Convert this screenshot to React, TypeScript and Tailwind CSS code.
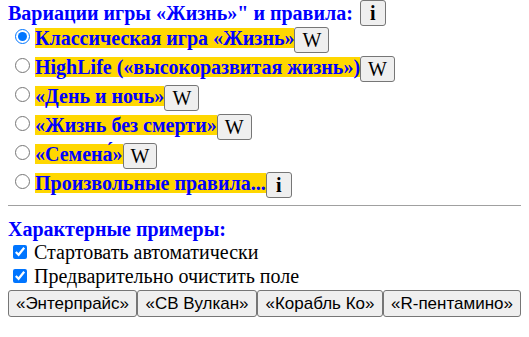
import { useState } from "react";

const rules = [
  { id: "classic", label: "Классическая игра «Жизнь»", btn: "W" },
  { id: "highlife", label: "HighLife («высокоразвитая жизнь»)", btn: "W" },
  { id: "daynight", label: "«День и ночь»", btn: "W" },
  { id: "nodeath", label: "«Жизнь без смерти»", btn: "W" },
  { id: "seeds", label: "«Семена́»", btn: "W" },
  { id: "custom", label: "Произвольные правила...", btn: "i" },
];

const examples = [
  { label: "«Энтерпрайс»", w: "w-[129px]" },
  { label: "«СВ Вулкан»", w: "w-[120px]" },
  { label: "«Корабль Ко»", w: "w-[126px]" },
  { label: "«R-пентамино»", w: "w-[138px]" },
];

function SmallButton({ children }: { children: string }) {
  return (
    <button
      type="button"
      className="h-[26px] px-[7px] border border-[#767676] rounded-[3px] bg-[#efefef] text-black text-[20px] leading-[22px] font-['Liberation_Serif',serif]"
    >
      {children}
    </button>
  );
}

function InfoButton() {
  return (
    <button
      type="button"
      className="h-[26px] w-[26px] border border-[#767676] rounded-[3px] bg-[#efefef] text-black text-[20px] font-bold leading-[22px] font-['Liberation_Serif',serif]"
    >
      i
    </button>
  );
}

export default function App() {
  const [rule, setRule] = useState("classic");
  const [autoStart, setAutoStart] = useState(true);
  const [clearField, setClearField] = useState(true);

  return (
    <div className="w-[529px] h-[337px] bg-white px-[8px] font-['Liberation_Serif',serif] text-black overflow-hidden">
      {/* Heading */}
      <div className="flex items-start h-[25px]">
        <h2 className="text-[20px] font-bold text-[#0000ff] leading-[24px] pt-[1px] whitespace-nowrap">
          Вариации игры «Жизнь»" и правила:
        </h2>
        <span className="ml-[7px]">
          <InfoButton />
        </span>
      </div>

      {/* Rules */}
      <div className="pl-[7px]">
        {rules.map((r) => (
          <div key={r.id} className="flex items-center h-[29px]">
            <input
              type="radio"
              name="rule"
              checked={rule === r.id}
              onChange={() => setRule(r.id)}
              className="w-[15px] h-[15px] m-0 mr-[5px] mb-[6px] accent-[#0075ff]"
            />
            <span className="bg-[#ffd700] text-[#0000ff] text-[20px] font-bold leading-[20px] mb-[3px] whitespace-nowrap">
              {r.label}
            </span>
            {r.btn === "i" ? <InfoButton /> : <SmallButton>{r.btn}</SmallButton>}
          </div>
        ))}
      </div>

      <hr className="mt-[6px] border-t border-[#a0a0a0]" />

      {/* Examples */}
      <div className="mt-[13px]">
        <h3 className="text-[20px] font-bold text-[#0000ff] leading-[21px]">Характерные примеры:</h3>
        <label className="flex items-center h-[24px] text-[20px] whitespace-nowrap">
          <input
            type="checkbox"
            checked={autoStart}
            onChange={(e) => setAutoStart(e.target.checked)}
            className="w-[14px] h-[14px] ml-[5px] mr-[7px] accent-[#0075ff]"
          />
          Стартовать автоматически
        </label>
        <label className="flex items-center h-[24px] text-[20px] whitespace-nowrap">
          <input
            type="checkbox"
            checked={clearField}
            onChange={(e) => setClearField(e.target.checked)}
            className="w-[14px] h-[14px] ml-[5px] mr-[7px] accent-[#0075ff]"
          />
          Предварительно очистить поле
        </label>
        <div className="flex mt-[2px]">
          {examples.map((ex) => (
            <button
              key={ex.label}
              type="button"
              className={`${ex.w} h-[27px] border border-[#767676] rounded-[3px] bg-[#efefef] text-black text-[17px] leading-[22px] whitespace-nowrap font-['Liberation_Sans',sans-serif]`}
            >
              {ex.label}
            </button>
          ))}
        </div>
      </div>
    </div>
  );
}
